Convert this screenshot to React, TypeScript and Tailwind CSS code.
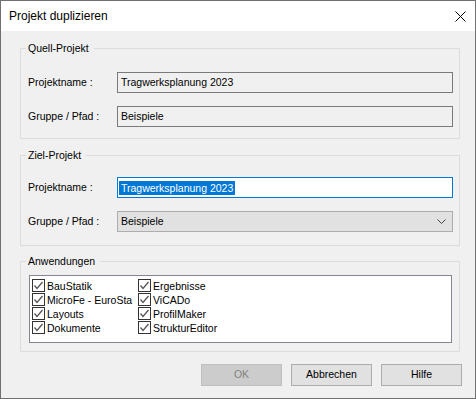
import { FC, ReactNode } from 'react';

const GroupBox: FC<{ title: string; className?: string; children: ReactNode }> = ({ title, className, children }) => (
    <fieldset className={`border border-[#dcdcdc] w-[440px] ${className ?? ''}`}>
        <legend className="ml-[5px] pl-[2px] pr-[5px] h-[14px] leading-[14px]">{title}</legend>
        {children}
    </fieldset>
);

const Check: FC<{ label: string }> = ({ label }) => (
    <div className="flex items-start h-[14px] w-[106px] overflow-hidden whitespace-nowrap">
        <span className="w-[13px] h-[13px] border border-[#333333] bg-white flex items-center justify-center shrink-0">
            <svg width="11" height="11" viewBox="0 0 11 11">
                <path d="M1.5 5.5 L4 8.5 L9.5 2" fill="none" stroke="#555555" strokeWidth="1.3" />
            </svg>
        </span>
        <span className="ml-[2px] leading-[14px]">{label}</span>
    </div>
);

export default function App() {
    // list column is narrow, the second entry shows cut off as in the dialog
    const left = ['BauStatik', 'MicroFe - EuroSta', 'Layouts', 'Dokumente'];
    const right = ['Ergebnisse', 'ViCADo', 'ProfilMaker', 'StrukturEditor'];

    return (
        <div className="w-[476px] h-[399px] border border-[#707070] flex flex-col bg-[#f0f0f0] font-['Liberation_Sans',Arial,sans-serif] text-[10.5px] text-black">
            {/* title bar */}
            <div className="h-[30px] bg-white flex items-center justify-between pl-[8px] pr-[9px] shrink-0">
                <span className="text-[12px]">Projekt duplizieren</span>
                <svg width="11" height="11" viewBox="0 0 11 11">
                    <path d="M0.5 0.5 L10.5 10.5 M10.5 0.5 L0.5 10.5" stroke="#000" strokeWidth="1" />
                </svg>
            </div>

            <div className="flex-1 flex flex-col pl-[19px] pt-[10px]">
                <GroupBox title="Quell-Projekt">
                    <div className="pl-[7px] pt-[17px] pb-[11px] flex flex-col gap-[13px]">
                        <div className="flex items-center">
                            <span className="w-[89px]">Projektname :</span>
                            <div className="w-[336px] h-[21px] border border-[#7a7a7a] flex items-center pl-[3px]">Tragwerksplanung 2023</div>
                        </div>
                        <div className="flex items-center">
                            <span className="w-[89px]">Gruppe / Pfad :</span>
                            <div className="w-[336px] h-[21px] border border-[#7a7a7a] flex items-center pl-[3px]">Beispiele</div>
                        </div>
                    </div>
                </GroupBox>

                <GroupBox title="Ziel-Projekt" className="mt-[9px]">
                    <div className="pl-[7px] pt-[15px] pb-[13px] flex flex-col gap-[13px]">
                        <div className="flex items-center">
                            <span className="w-[89px]">Projektname :</span>
                            <div className="w-[336px] h-[21px] border border-[#0078d7] bg-white flex items-center pl-[1px]">
                                <span className="bg-[#0078d7] text-white px-[2px] leading-[14px]">Tragwerksplanung 2023</span>
                            </div>
                        </div>
                        <div className="flex items-center">
                            <span className="w-[89px]">Gruppe / Pfad :</span>
                            <div className="w-[336px] h-[21px] border border-[#adadad] bg-[#e1e1e1] flex items-center justify-between pl-[3px] pr-[6px]">
                                <span>Beispiele</span>
                                <svg width="9" height="5" viewBox="0 0 9 5">
                                    <path d="M0.5 0.5 L4.5 4.5 L8.5 0.5" fill="none" stroke="#404040" strokeWidth="1" />
                                </svg>
                            </div>
                        </div>
                    </div>
                </GroupBox>

                <GroupBox title="Anwendungen" className="mt-[8px]">
                    <div className="pl-[8px] pt-[7px] pb-[8px]">
                        <div className="w-[423px] h-[68px] border border-[#828790] bg-white pl-[2px] pt-[3px] flex">
                            <div className="flex flex-col">
                                {left.map((l) => <Check key={l} label={l} />)}
                            </div>
                            <div className="flex flex-col">
                                {right.map((l) => <Check key={l} label={l} />)}
                            </div>
                        </div>
                    </div>
                </GroupBox>

                <div className="mt-[12px] flex justify-end gap-[9px] pr-[13px]">
                    <button className="w-[81px] h-[22px] border border-[#bfbfbf] bg-[#cccccc] text-[#838383]">OK</button>
                    <button className="w-[81px] h-[22px] border border-[#adadad] bg-[#e1e1e1]">Abbrechen</button>
                    <button className="w-[81px] h-[22px] border border-[#adadad] bg-[#e1e1e1]">Hilfe</button>
                </div>
            </div>
        </div>
    );
}
